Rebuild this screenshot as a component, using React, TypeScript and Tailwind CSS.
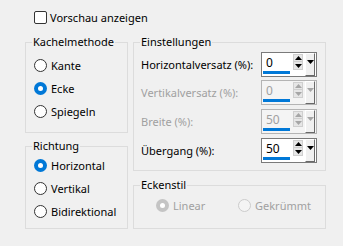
import React from "react"

const ui = "font-['Noto_Sans',sans-serif] text-[11px] leading-[16px]"

function Tri({ up, color }: { up: boolean; color: string }) {
  return (
    <svg width="7" height="4" viewBox="0 0 7 4">
      <polygon points={up ? "3.5,0 7,4 0,4" : "0,0 7,0 3.5,4"} fill={color} />
    </svg>
  )
}

function Radio({
  label,
  checked = false,
  disabled = false,
}: {
  label: string
  checked?: boolean
  disabled?: boolean
}) {
  let dot = "border border-[#333333] bg-white"
  if (checked) dot = disabled ? "bg-[#c4c4c4]" : "bg-[#0078d7]"
  else if (disabled) dot = "border border-[#cccccc] bg-[#f4f4f4]"
  return (
    <div className="flex items-center h-[23px]">
      <span className={`w-[13px] h-[13px] rounded-full flex items-center justify-center ${dot}`}>
        {checked && <span className="w-[5px] h-[5px] rounded-full bg-white" />}
      </span>
      <span className={`ml-[4px] ${disabled ? "text-[#a0a0a0]" : "text-black"}`}>{label}</span>
    </div>
  )
}

function Spin({ value, disabled = false }: { value: string; disabled?: boolean }) {
  const arrow = disabled ? "#a6a6a6" : "#000000"
  return (
    <div
      className={`flex w-[56px] h-[25px] border ${
        disabled ? "border-[#b4b4b4] bg-[#f4f4f4]" : "border-[#7a7a7a] bg-white"
      }`}
    >
      <div className="relative flex-1">
        <span className={`absolute left-[4px] top-[2px] text-[12px] ${disabled ? "text-[#a0a0a0]" : "text-black"}`}>
          {value}
        </span>
        <span className="absolute left-[1px] top-[18px] w-[27px] h-[3px] bg-[#0078d7]" />
      </div>
      <div className="flex flex-col mt-[1px] w-[10px]">
        <div className="h-[8px] bg-[#e6e6e6] border border-[#cfcfcf] flex items-center justify-center">
          <Tri up color={arrow} />
        </div>
        <div className="h-[8px] bg-[#e6e6e6] border border-t-0 border-[#cfcfcf] flex items-center justify-center">
          <Tri up={false} color={arrow} />
        </div>
      </div>
      <div className="ml-[2px] mr-[1px] w-[10px] bg-[#f0f0f0] border-l border-t border-white border-r border-r-[#696969] border-b border-b-[#696969] flex justify-center pt-[6px]">
        <Tri up={false} color={arrow} />
      </div>
    </div>
  )
}

function Group({
  title,
  className,
  inner,
  children,
}: {
  title: string
  className: string
  inner: string
  children: React.ReactNode
}) {
  return (
    <fieldset className={`m-0 p-0 border border-[#dcdcdc] min-w-0 ${className}`}>
      <legend className="ml-[6px] px-[1px] text-black">{title}</legend>
      <div className={inner}>{children}</div>
    </fieldset>
  )
}

function Row({ label, value, disabled = false }: { label: string; value: string; disabled?: boolean }) {
  return (
    <div className="flex items-center h-[25px] pl-[7px] pr-[8px]">
      <span className={`flex-1 ${disabled ? "text-[#a0a0a0]" : "text-black"}`}>{label}</span>
      <Spin value={value} disabled={disabled} />
    </div>
  )
}

export default function App() {
  return (
    <div className={`w-[343px] h-[246px] bg-[#f0f0f0] pl-[25px] pt-[9px] ${ui}`}>
      <div className="flex items-center h-[17px] pl-[9px]">
        <span className="w-[13px] h-[13px] border border-[#333333] bg-white rounded-[2px]" />
        <span className="ml-[3px] text-black">Vorschau anzeigen</span>
      </div>
      <div className="flex mt-[8px]">
        <div className="flex flex-col w-[103px]">
          <Group title="Kachelmethode" className="h-[99px]" inner="pl-[8px] pt-[4px]">
            <Radio label="Kante" />
            <Radio label="Ecke" checked />
            <Radio label="Spiegeln" />
          </Group>
          <Group title="Richtung" className="mt-[5px] h-[91px]" inner="pl-[8px]">
            <Radio label="Horizontal" checked />
            <Radio label="Vertikal" />
            <Radio label="Bidirektional" />
          </Group>
        </div>
        <div className="flex flex-col w-[193px] ml-[5px]">
          <Group title="Einstellungen" className="h-[137px]" inner="pt-[2px]">
            <Row label="Horizontalversatz (%):" value="0" />
            <div className="mt-[3px]">
              <Row label="Vertikalversatz (%):" value="0" disabled />
            </div>
            <div className="mt-[4px]">
              <Row label="Breite (%):" value="50" disabled />
            </div>
            <div className="mt-[4px]">
              <Row label="Übergang (%):" value="50" />
            </div>
          </Group>
          <Group title="Eckenstil" className="mt-[6px] h-[52px]" inner="pt-[1px] pl-[22px] flex">
            <div className="w-[82px]">
              <Radio label="Linear" checked disabled />
            </div>
            <Radio label="Gekrümmt" disabled />
          </Group>
        </div>
      </div>
    </div>
  )
}
